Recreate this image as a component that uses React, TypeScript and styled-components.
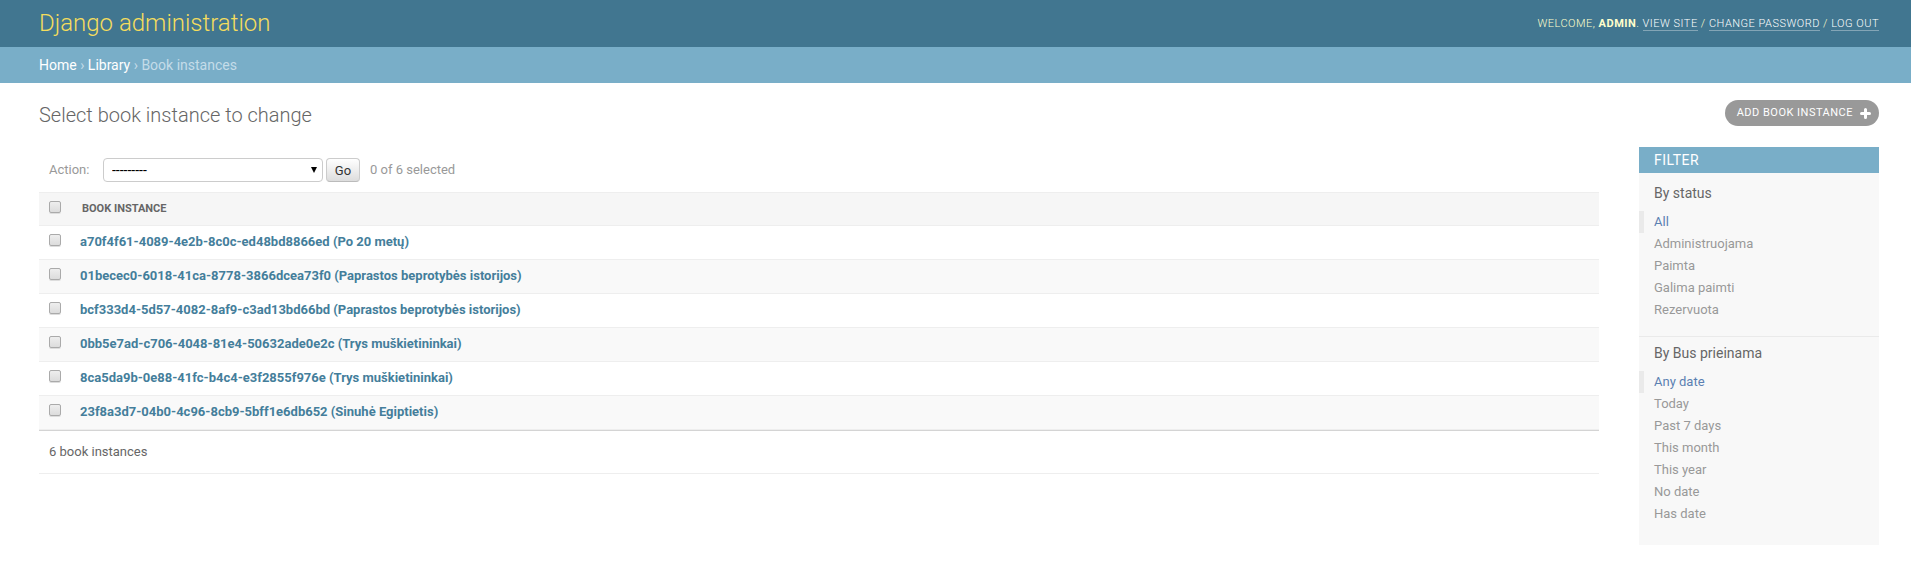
import React, { useState } from "react";
import styled, { createGlobalStyle } from "styled-components";

const GlobalStyle = createGlobalStyle`
  *, *::before, *::after { box-sizing: border-box; }
  body {
    margin: 0;
    background: #fff;
    color: #333;
    font-family: Roboto, "Liberation Sans", sans-serif;
    font-size: 13px;
  }
  a { color: #447e9b; text-decoration: none; }
`;

const Header = styled.header`
  display: flex;
  align-items: center;
  justify-content: space-between;
  height: 47px;
  padding: 0 32px 0 39px;
  background: #417690;
  color: #ffc;
`;

const SiteName = styled.h1`
  margin: 0;
  padding-bottom: 2px;
  font-size: 24px;
  font-weight: 300;
  line-height: 28px;
  a { color: #f5dd5d; }
`;

const UserTools = styled.div`
  font-size: 11px;
  font-weight: 300;
  line-height: 14px;
  letter-spacing: 0.045em;
  text-transform: uppercase;
  strong { font-weight: 700; }
  a {
    color: #fff;
    border-bottom: 1px solid rgba(255, 255, 255, 0.35);
  }
`;

const Breadcrumbs = styled.nav`
  height: 36px;
  padding: 0 32px 0 39px;
  background: #79aec8;
  color: #c4dce8;
  font-size: 14px;
  line-height: 36px;
  a { color: #fff; }
`;

const Content = styled.main`
  padding: 17px 32px 20px 39px;
`;

const TitleRow = styled.div`
  display: flex;
  align-items: flex-start;
  justify-content: space-between;
  height: 47px;
`;

const PageTitle = styled.h2`
  margin: 0;
  color: #666;
  font-size: 20px;
  font-weight: 300;
  line-height: 30px;
`;

const AddLink = styled.a`
  display: flex;
  align-items: center;
  gap: 7px;
  height: 26px;
  padding: 0 8px 0 12px;
  border-radius: 13px;
  background: #999;
  color: #fff;
  font-size: 11px;
  line-height: 24px;
  letter-spacing: 0.045em;
  text-transform: uppercase;
  svg { display: block; }
`;

const Columns = styled.div`
  display: flex;
  align-items: flex-start;
  gap: 40px;
`;

const ChangeList = styled.form`
  flex: 1;
  min-width: 0;
`;

const Actions = styled.div`
  display: flex;
  align-items: center;
  height: 45px;
  padding: 0 10px;
  color: #999;
  line-height: 24px;
  label { width: 54px; }
`;

const SelectWrap = styled.div`
  position: relative;
  width: 220px;
  margin-right: 3px;
  svg {
    position: absolute;
    right: 6px;
    top: 9px;
    pointer-events: none;
  }
`;

const Select = styled.select`
  display: block;
  appearance: none;
  width: 100%;
  height: 24px;
  padding: 0 20px 0 8px;
  border: 1px solid #ccc;
  border-radius: 4px;
  background: #fff;
  color: #000;
  font: 14px Roboto, sans-serif;
`;

const GoButton = styled.button`
  height: 24px;
  width: 34px;
  margin-right: 10px;
  padding: 1px 0 0;
  border: 1px solid #ccc;
  border-bottom-color: #bbb;
  border-radius: 4px;
  background: linear-gradient(#fff, #ddd);
  color: #333;
  font: 13px Roboto, sans-serif;
`;

const Table = styled.table`
  width: 100%;
  border-collapse: separate;
  border-spacing: 0;
  border-bottom: 1px solid #d4d4d4;
  th, td {
    height: 34px;
    padding: 0;
    border-bottom: 1px solid #eee;
    text-align: left;
    vertical-align: top;
  }
  thead th {
    border-top: 1px solid #eee;
    background: #f6f6f6;
  }
  tbody tr:nth-child(even) { background: #f9f9f9; }
`;

const HeadLabel = styled.span`
  display: block;
  padding: 0 2px;
  color: #666;
  font-size: 11px;
  font-weight: 700;
  line-height: 31px;
  text-transform: uppercase;
`;

const CheckCell = styled.th`
  width: 41px;
`;

const Check = styled.input`
  display: block;
  appearance: none;
  width: 12px;
  height: 12px;
  margin: 8px 0 0 10px;
  border: 1px solid #aaa;
  border-radius: 2px;
  background: linear-gradient(#eee, #dcdcdc);
  box-shadow: 0 1px 0 #ddd;
  &:checked { background: #79aec8; }
`;

const RowLink = styled.a`
  display: block;
  font-size: 13px;
  font-weight: 700;
  line-height: 32px;
`;

const Paginator = styled.p`
  margin: 0;
  padding: 0 10px;
  border-bottom: 1px solid #eee;
  color: #666;
  line-height: 42px;
`;

const Sidebar = styled.aside`
  flex: 0 0 240px;
  padding-bottom: 5px;
  background: #f8f8f8;
`;

const SidebarTitle = styled.h2`
  margin: 0;
  padding: 0 15px;
  background: #79aec8;
  color: #fff;
  font-size: 14px;
  font-weight: 400;
  line-height: 26px;
  letter-spacing: 0.035em;
  text-transform: uppercase;
`;

const FilterGroup = styled.section`
  padding-bottom: 15px;
  & + & { border-top: 1px solid #eaeaea; }
`;

const FilterHeading = styled.h3<{ $first: boolean }>`
  margin: 0;
  padding: ${(p) => (p.$first ? "10px 15px 8px" : "6px 15px 8px")};
  color: #666;
  font-size: 14px;
  font-weight: 400;
  line-height: 20px;
`;

const FilterList = styled.ul`
  margin: 0;
  padding: 0;
  list-style: none;
`;

const FilterItem = styled.li<{ $selected: boolean }>`
  padding-left: 10px;
  border-left: 5px solid ${(p) => (p.$selected ? "#eaeaea" : "transparent")};
  line-height: 22px;
  a { color: ${(p) => (p.$selected ? "#5b80b2" : "#999")}; }
`;

const books = [
  "a70f4f61-4089-4e2b-8c0c-ed48bd8866ed (Po 20 metų)",
  "01becec0-6018-41ca-8778-3866dcea73f0 (Paprastos beprotybės istorijos)",
  "bcf333d4-5d57-4082-8af9-c3ad13bd66bd (Paprastos beprotybės istorijos)",
  "0bb5e7ad-c706-4048-81e4-50632ade0e2c (Trys muškietininkai)",
  "8ca5da9b-0e88-41fc-b4c4-e3f2855f976e (Trys muškietininkai)",
  "23f8a3d7-04b0-4c96-8cb9-5bff1e6db652 (Sinuhė Egiptietis)",
];

const filters = [
  { title: "By status", options: ["All", "Administruojama", "Paimta", "Galima paimti", "Rezervuota"] },
  {
    title: "By Bus prieinama",
    options: ["Any date", "Today", "Past 7 days", "This month", "This year", "No date", "Has date"],
  },
];

export default function App() {
  const [selected, setSelected] = useState<number[]>([]);
  const allSelected = selected.length === books.length;
  const toggle = (i: number) =>
    setSelected((s) => (s.includes(i) ? s.filter((n) => n !== i) : [...s, i]));

  return (
    <>
      <GlobalStyle />
      <Header>
        <SiteName><a href="#home">Django administration</a></SiteName>
        <UserTools>
          Welcome, <strong>admin</strong>. <a href="#site">View site</a> / <a href="#password">Change password</a> /{" "}
          <a href="#logout">Log out</a>
        </UserTools>
      </Header>
      <Breadcrumbs aria-label="Breadcrumbs">
        <a href="#home">Home</a> › <a href="#library">Library</a> › Book instances
      </Breadcrumbs>
      <Content>
        <TitleRow>
          <PageTitle>Select book instance to change</PageTitle>
          <AddLink href="#add">
            Add book instance
            <svg width="11" height="11" viewBox="0 0 11 11" aria-hidden="true">
              <path d="M5.5 1.5V9.5M1.5 5.5H9.5" stroke="#fff" strokeWidth="3" strokeLinecap="round" />
            </svg>
          </AddLink>
        </TitleRow>
        <Columns>
          <ChangeList onSubmit={(e) => e.preventDefault()}>
            <Actions>
              <label htmlFor="action">Action:</label>
              <SelectWrap>
                <Select id="action">
                  <option>---------</option>
                  <option>Delete selected book instances</option>
                </Select>
                <svg width="6" height="6" viewBox="0 0 6 6" aria-hidden="true">
                  <path d="M0 0H6L3 6Z" fill="#000" />
                </svg>
              </SelectWrap>
              <GoButton type="submit">Go</GoButton>
              <span>{selected.length} of {books.length} selected</span>
            </Actions>
            <Table>
              <thead>
                <tr>
                  <CheckCell>
                    <Check
                      type="checkbox"
                      aria-label="Select all"
                      checked={allSelected}
                      onChange={() => setSelected(allSelected ? [] : books.map((_, i) => i))}
                    />
                  </CheckCell>
                  <th scope="col"><HeadLabel>Book instance</HeadLabel></th>
                </tr>
              </thead>
              <tbody>
                {books.map((book, i) => (
                  <tr key={book}>
                    <td>
                      <Check
                        type="checkbox"
                        aria-label={`Select ${book}`}
                        checked={selected.includes(i)}
                        onChange={() => toggle(i)}
                      />
                    </td>
                    <td><RowLink href={`#book-${i + 1}`}>{book}</RowLink></td>
                  </tr>
                ))}
              </tbody>
            </Table>
            <Paginator>{books.length} book instances</Paginator>
          </ChangeList>
          <Sidebar>
            <SidebarTitle>Filter</SidebarTitle>
            {filters.map((group, g) => (
              <FilterGroup key={group.title}>
                <FilterHeading $first={g === 0}>{group.title}</FilterHeading>
                <FilterList>
                  {group.options.map((option, i) => (
                    <FilterItem key={option} $selected={i === 0}>
                      <a href={`#filter-${g}-${i}`}>{option}</a>
                    </FilterItem>
                  ))}
                </FilterList>
              </FilterGroup>
            ))}
          </Sidebar>
        </Columns>
      </Content>
    </>
  );
}
